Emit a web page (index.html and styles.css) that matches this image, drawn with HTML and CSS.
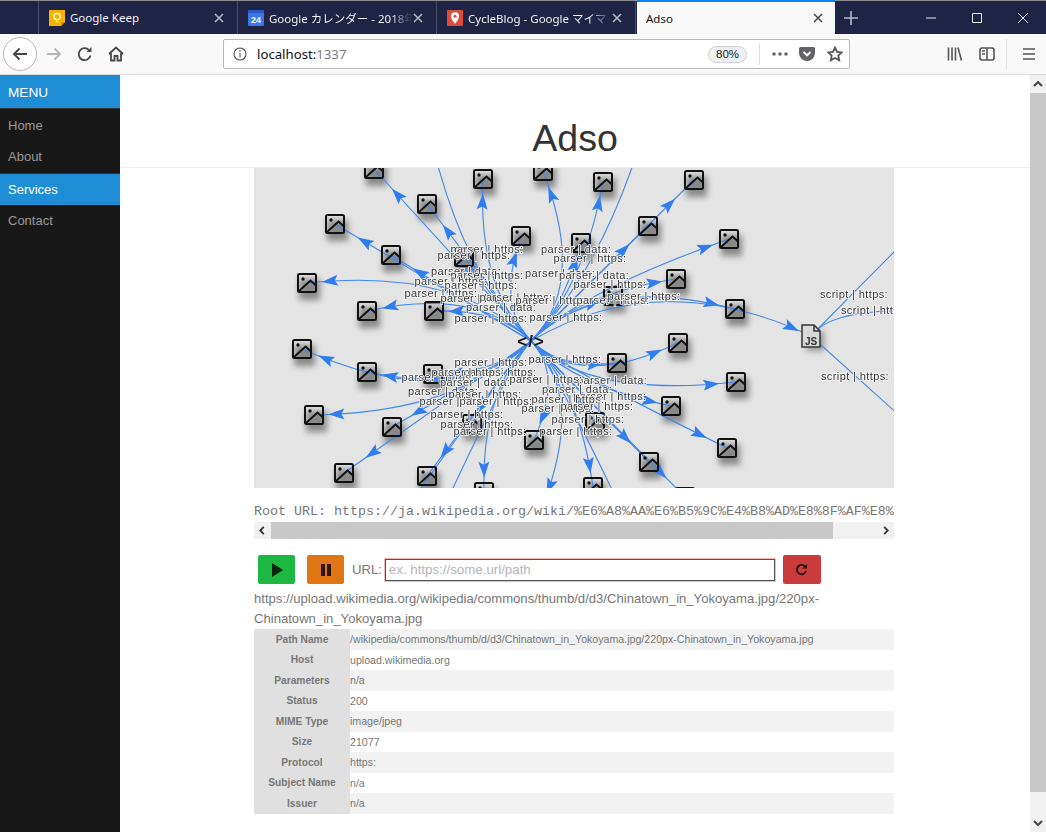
FILE: index.html
```html
<!doctype html>
<html lang="en">
<head>
    <meta charset="UTF-8">
    <title>Adso</title>
    <link rel="stylesheet" href="styles.css">
</head>
<body>

<div class="tabbar">
    <div class="tab-spacer"></div>
    <div class="tab">
        <svg class="favicon" viewBox="0 0 16 16"><path d="M0 0h16v12l-4 4H0z" fill="#f4b400"/><path d="M12 16v-4h4z" fill="#c98f00"/><circle cx="8" cy="6.500" r="3.200" fill="none" stroke="#fff" stroke-width="1.200"/><path d="M6.500 11.500h3" stroke="#fff" stroke-width="1.200"/></svg>
        <span class="tab-title">Google Keep</span>
        <svg class="tab-close" viewBox="0 0 12 12"><path d="M2 2l8 8M10 2l-8 8"/></svg>
    </div>
    <div class="tab">
        <svg class="favicon" viewBox="0 0 16 16"><rect width="16" height="16" rx="1" fill="#3b78e7"/><rect width="16" height="3" fill="#2a56c6"/><text x="8" y="13" class="cal-day">24</text></svg>
        <span class="tab-title fade">Google カレンダー - 2018年</span>
        <svg class="tab-close" viewBox="0 0 12 12"><path d="M2 2l8 8M10 2l-8 8"/></svg>
    </div>
    <div class="tab">
        <svg class="favicon" viewBox="0 0 16 16"><rect width="16" height="16" rx="1" fill="#dd4b39"/><path d="M8 2.200a4 4 0 0 0-4 4c0 3 4 7.600 4 7.600s4-4.600 4-7.600a4 4 0 0 0-4-4z" fill="#fff"/><circle cx="8" cy="6.200" r="1.500" fill="#dd4b39"/></svg>
        <span class="tab-title fade">CycleBlog - Google マイマップ</span>
        <svg class="tab-close" viewBox="0 0 12 12"><path d="M2 2l8 8M10 2l-8 8"/></svg>
    </div>
    <div class="tab tab-active">
        <span class="tab-title">Adso</span>
        <svg class="tab-close" viewBox="0 0 12 12"><path d="M2 2l8 8M10 2l-8 8"/></svg>
    </div>
    <svg class="tab-new" viewBox="0 0 14 14"><path d="M7 0v14M0 7h14"/></svg>
    <div class="win-controls">
        <svg viewBox="0 0 12 12"><path d="M1 6h10"/></svg>
        <svg viewBox="0 0 12 12"><path d="M1.500 1.500h9v9h-9z"/></svg>
        <svg viewBox="0 0 12 12"><path d="M1 1l10 10M11 1L1 11"/></svg>
    </div>
</div>

<div class="toolbar">
    <div class="nav-back">
        <svg viewBox="0 0 16 16"><path d="M15 8H2M7.500 2.500L2 8l5.500 5.500"/></svg>
    </div>
    <svg class="nav-icon nav-forward" viewBox="0 0 16 16"><path d="M1 8h13M8.500 2.500L14 8l-5.500 5.500"/></svg>
    <svg class="nav-icon" viewBox="0 0 16 16"><path d="M13.500 9.500A6 6 0 1 1 12 4"/><path d="M14.500 1v5h-5z" class="solid"/></svg>
    <svg class="nav-icon" viewBox="0 0 16 16"><path d="M1 8l7-6.500L15 8M3 7v7.500h3.500V10h3v4.500H13V7"/></svg>
    <div class="urlbar">
        <svg class="info-icon" viewBox="0 0 14 14"><circle cx="7" cy="7" r="6"/><path d="M7 6v4.500M7 3.200v1.500"/></svg>
        <span class="url-host">localhost:<span class="url-port">1337</span></span>
        <span class="zoom-pill">80%</span>
        <span class="url-sep"></span>
        <svg class="url-dots" viewBox="0 0 16 4"><circle cx="2" cy="2" r="1.800"/><circle cx="8" cy="2" r="1.800"/><circle cx="14" cy="2" r="1.800"/></svg>
        <svg class="url-pocket" viewBox="0 0 16 14"><path d="M1.500 0h13A1.500 1.500 0 0 1 16 1.500V6A8 8 0 0 1 0 6V1.500A1.500 1.500 0 0 1 1.500 0z"/><path d="M4.500 5L8 8.300 11.500 5" class="pocket-mark"/></svg>
        <svg class="url-star" viewBox="0 0 16 16"><path d="M8 1.500l2 4.300 4.700.6-3.400 3.200.9 4.700L8 12l-4.200 2.300.9-4.700L1.300 6.400 6 5.800z"/></svg>
    </div>
    <div class="tool-right">
        <svg viewBox="0 0 16 16"><path d="M1.500 1.500v13M5 1.500v13M8.500 1.500v13M11 1.500l3.500 13"/></svg>
        <svg viewBox="0 0 16 16"><rect x="1" y="2" width="14" height="12" rx="2"/><path d="M8 2v12M3 5h3M3 8h3"/></svg>
        <span class="tool-sep"></span>
        <svg viewBox="0 0 16 16"><path d="M2 3h12M2 8h12M2 13h12"/></svg>
    </div>
</div>

<div class="viewport">
    <nav class="side-menu">
        <a class="menu-heading" href="#">MENU</a>
        <ul class="menu-list">
            <li><a href="#">Home</a></li>
            <li><a href="#">About</a></li>
            <li class="menu-divided menu-selected"><a href="#">Services</a></li>
            <li><a href="#">Contact</a></li>
        </ul>
    </nav>

    <main class="main">
        <header class="header"><h1>Adso</h1></header>
        <div class="content">
            <svg id="graph" class="graph" viewBox="254 168 640 320"></svg>

            <pre class="root-url">Root URL: https://ja.wikipedia.org/wiki/%E6%A8%AA%E6%B5%9C%E4%B8%AD%E8%8F%AF%E8%A1%97</pre>
            <div class="hscroll">
                <svg viewBox="0 0 6 10"><path d="M5 1L1 5l4 4"/></svg>
                <div class="hscroll-track"><div class="hscroll-thumb"></div></div>
                <svg viewBox="0 0 6 10"><path d="M1 1l4 4-4 4"/></svg>
            </div>

            <form class="controls">
                <button type="button" class="btn btn-play"><svg viewBox="0 0 12 14"><path d="M1 0l11 7-11 7z"/></svg></button>
                <button type="button" class="btn btn-pause"><svg viewBox="0 0 12 14"><path d="M1 1h4v12H1zM7 1h4v12H7z"/></svg></button>
                <label class="url-label" for="url">URL:</label>
                <input id="url" class="url-input" type="text" placeholder="ex. https://some.url/path">
                <button type="button" class="btn btn-reload"><svg viewBox="0 0 14 14"><path d="M11.800 8.500A5 5 0 1 1 10.500 3.500" class="reload-arc"/><path d="M13 .8v5H8z"/></svg></button>
            </form>

            <p class="request-url">https://upload.wikimedia.org/wikipedia/commons/thumb/d/d3/Chinatown_in_Yokoyama.jpg/220px-Chinatown_in_Yokoyama.jpg</p>

            <table class="details">
                <tr><th>Path Name</th><td>/wikipedia/commons/thumb/d/d3/Chinatown_in_Yokoyama.jpg/220px-Chinatown_in_Yokoyama.jpg</td></tr>
                <tr><th>Host</th><td>upload.wikimedia.org</td></tr>
                <tr><th>Parameters</th><td>n/a</td></tr>
                <tr><th>Status</th><td>200</td></tr>
                <tr><th>MIME Type</th><td>image/jpeg</td></tr>
                <tr><th>Size</th><td>21077</td></tr>
                <tr><th>Protocol</th><td>https:</td></tr>
                <tr><th>Subject Name</th><td>n/a</td></tr>
                <tr><th>Issuer</th><td>n/a</td></tr>
            </table>
        </div>
    </main>

    <div class="vscroll">
        <svg viewBox="0 0 10 6"><path d="M1 5l4-4 4 4"/></svg>
        <div class="vscroll-track"><div class="vscroll-thumb"></div></div>
        <svg viewBox="0 0 10 6"><path d="M1 1l4 4 4-4"/></svg>
    </div>
</div>

<script src="graph.js"></script>
</body>
</html>
```

FILE: styles.css
```css
*{margin:0;padding:0;box-sizing:border-box;}
html,body{height:100%;overflow:hidden;}
body{
    display:flex;
    flex-direction:column;
    font-family:"Liberation Sans",Arial,sans-serif;
    background:#fff;
    color:#777;
}

/* tab strip */
.tabbar{
    display:flex;
    align-items:stretch;
    height:34px;
    flex:none;
    background:#1f2344;
    border-top:1px solid #8d8d92;
    color:#f2f2f6;
}
.tab-spacer{width:39px;border-right:1px solid #4b4e68;}
.tab{
    display:flex;
    align-items:center;
    width:199px;
    padding:0 12px 0 10px;
    border-right:1px solid #4b4e68;
}
.favicon{width:16px;height:16px;flex:none;margin-right:5px;}
.cal-day{font:bold 9px "Liberation Sans",sans-serif;fill:#fff;text-anchor:middle;}
.tab-title{
    flex:1;
    min-width:0;
    white-space:nowrap;
    overflow:hidden;
    font-family:"Noto Sans","Noto Sans CJK JP",sans-serif;
    font-size:11.500px;
}
.fade{
    -webkit-mask-image:linear-gradient(to right,#000 85%,transparent 100%);
    mask-image:linear-gradient(to right,#000 85%,transparent 100%);
}
.tab-close{width:12px;height:12px;flex:none;fill:none;stroke:#b9bac6;stroke-width:1.500;}
.tab-active{
    width:198px;
    margin-left:1px;
    margin-top:-1px;
    padding:0 11px 0 9px;
    background:#f9f9fa;
    color:#111;
    border-top:2px solid #0a84ff;
    border-right:0;
}
.tab-active .tab-close{stroke:#444;}
.tab-new{width:14px;height:14px;align-self:center;margin-left:9px;fill:none;stroke:#b9bac6;stroke-width:1.600;}
.win-controls{
    display:flex;
    align-items:center;
    gap:34px;
    margin-left:auto;
    padding-right:17px;
}
.win-controls svg{width:12px;height:12px;fill:none;stroke:#e8e8ee;stroke-width:1;}

/* toolbar */
.toolbar{
    display:flex;
    align-items:center;
    height:41px;
    flex:none;
    background:#f9f9fa;
    border-bottom:1px solid #d8d8da;
    padding-left:3px;
}
.nav-back{
    display:flex;
    align-items:center;
    justify-content:center;
    width:34px;
    height:34px;
    border-radius:50%;
    border:1px solid #b8b8ba;
    background:#fff;
    flex:none;
}
.nav-back svg{width:16px;height:16px;fill:none;stroke:#444;stroke-width:1.800;}
.nav-icon{width:16px;height:16px;flex:none;margin-left:15px;fill:none;stroke:#484848;stroke-width:1.800;}
.nav-forward{margin-left:9px;stroke:#b4b4b6;}
.nav-icon .solid{fill:#484848;stroke:none;}
.urlbar{
    display:flex;
    align-items:center;
    width:627px;
    height:30px;
    margin-left:99px;
    background:#fff;
    border:1px solid #b9b9bb;
    border-radius:2px;
    padding:0 6px 0 9px;
    font-size:14px;
    flex:none;
}
.info-icon{width:14px;height:14px;flex:none;fill:none;stroke:#555;stroke-width:1.100;}
.url-host{margin-left:10px;color:#111;font-family:"Noto Sans",sans-serif;font-size:13.200px;}
.url-port{color:#7b7b80;}
.zoom-pill{
    margin-left:auto;
    width:39px;
    height:17px;
    line-height:15px;
    text-align:center;
    font-size:11.500px;
    color:#222;
    background:#f0f0f2;
    border:1px solid #d0d0d2;
    border-radius:9px;
}
.url-sep{width:1px;height:22px;background:#dcdcde;margin:0 12px;}
.url-dots{width:16px;height:4px;fill:#666;}
.url-pocket{width:16px;height:14px;margin-left:11px;fill:#636367;}
.pocket-mark{fill:none;stroke:#fff;stroke-width:2;}
.url-star{width:16px;height:16px;margin-left:12px;fill:none;stroke:#555;stroke-width:1.800;}
.tool-right{
    display:flex;
    align-items:center;
    margin-left:auto;
    padding-right:9px;
}
.tool-right svg{width:16px;height:16px;fill:none;stroke:#555;stroke-width:1.600;margin-left:16px;}
.tool-sep{width:1px;height:30px;background:#e2e2e4;margin-left:11px;margin-right:-2px;}

/* page */
.viewport{display:flex;flex:1;min-height:0;}
.side-menu{width:120px;flex:none;background:#191818;font-size:13px;}
.side-menu a{display:block;text-decoration:none;color:#999;padding:0 8px;}
.menu-heading{
    height:34px;
    line-height:35px;
    font-size:13.600px;
    background:#1f8dd6;
    border-bottom:1px solid #333;
}
.side-menu a.menu-heading{color:#fff;}
.menu-list{list-style:none;padding-top:1px;}
.menu-list a{height:31px;line-height:31px;}
.menu-divided{margin-top:1px;border-top:1px solid #333;}
.menu-selected{background:#1f8dd6;}
.side-menu .menu-selected a{color:#fff;}

.main{flex:1;min-width:0;overflow:hidden;}
.header{
    height:93px;
    padding-top:42px;
    text-align:center;
    border-bottom:1px solid #eee;
}
.header h1{font-size:37.600px;line-height:42px;font-weight:300;color:#333;}
.content{width:640px;margin-left:134px;}
.graph{display:block;width:640px;height:320px;background:#e4e4e4;filter:blur(.35px);}
.g-edge{fill:none;stroke:#3f86ee;stroke-width:1.100;}
.g-arrow{fill:#2f7df0;}
.g-label{
    font:11px "Liberation Sans",sans-serif;
    fill:#333;
    stroke:#fff;
    stroke-width:1.500px;
    paint-order:stroke;
    letter-spacing:.4px;
    text-anchor:middle;
}
.g-root{font:bold 17px "Liberation Sans",sans-serif;fill:#111;text-anchor:middle;letter-spacing:1px;}
.g-js{font:bold 10px "Liberation Sans",sans-serif;fill:#333;text-anchor:middle;}
.root-url{
    margin-top:16px;
    height:15px;
    overflow:hidden;
    font:13.330px/15px "Liberation Mono",monospace;
    color:#777;
    white-space:pre;
}
.hscroll{
    display:flex;
    align-items:center;
    height:17px;
    margin-top:3px;
    background:#f1f1f1;
}
.hscroll svg{width:6px;height:9px;flex:none;margin:0 6px 0 5px;fill:none;stroke:#333;stroke-width:2;}
.hscroll svg:last-child{margin:0 5px 0 6px;}
.hscroll-track{flex:1;height:100%;}
.hscroll-thumb{width:562px;height:100%;background:#c8c8c8;}
.controls{
    display:flex;
    align-items:center;
    height:29px;
    margin-top:16px;
    padding-left:4px;
    font-size:13.100px;
}
.btn{
    display:flex;
    align-items:center;
    justify-content:center;
    width:37px;
    height:29px;
    border:0;
    border-radius:2px;
    fill:rgba(0,0,0,.8);
}
.btn svg{width:12px;height:14px;}
.btn-play{background:#1cb841;}
.btn-pause{background:#df7514;margin-left:12px;}
.btn-reload{background:#ca3c3c;width:38px;margin-left:8px;}
.btn-reload svg{width:13px;height:13px;}
.reload-arc{fill:none;stroke:rgba(0,0,0,.8);stroke-width:2;}
.url-label{margin-left:8px;}
.url-input{
    width:390px;
    height:22px;
    margin-left:3px;
    padding:0 3px;
    border:1px solid #555;
    outline:1px solid #f2b8b8;
    font:13.300px "Liberation Sans",sans-serif;
    color:#777;
}
.url-input::placeholder{color:#b5b5b5;opacity:1;}
.request-url{
    margin-top:5px;
    font-size:13.100px;
    line-height:20px;
    color:#777;
}
.details{
    width:640px;
    border-collapse:collapse;
    font-size:10.640px;
    table-layout:fixed;
}
.details tr{height:20.500px;}
.details th{width:96px;background:#e0e0e0;color:#777;font-size:10.200px;font-weight:bold;text-align:center;padding:0;}
.details td{padding:0;color:#777;}
.details tr:nth-child(odd) td{background:#f2f2f2;}

.vscroll{
    display:flex;
    flex-direction:column;
    width:16px;
    flex:none;
    background:#f1f1f1;
}
.vscroll svg{width:10px;height:6px;margin:6px 3px;fill:none;stroke:#444;stroke-width:2;flex:none;}
.vscroll-track{flex:1;}
.vscroll-thumb{height:699px;background:#c8c8c8;}
```

FILE: graph.js
```js
// request graph, screen-like coordinates (see the viewBox on #graph)
var NS = "http://www.w3.org/2000/svg";
var oGraph = document.getElementById("graph");
var root = [531, 341];
var js = [811, 336];
var BUNDLE = 0.33;

// x, y, how far the edge leaves along the diagonal (default BUNDLE, 0 = straight)
var aImg = [
    [374,169,0],[483,179],[543,171],[603,182],[694,180,0],[427,204,0],[335,224,0],
    [648,226,0],[521,236],[729,239,.25],[391,255,0],[464,257],[581,243],[676,279],
    [307,283],[367,311],[434,311],[613,296],[735,309],[302,349],[367,372],
    [433,374],[617,363],[678,343],[736,382,.28],[314,415],[392,427,.1],[671,406],
    [472,424],[534,440],[595,422],[727,448,.1],[344,473,0],[427,476,.1],[649,462,0],
    [484,492],[593,487],
    // these fall outside the visible part of the canvas
    [425,110],[650,110],[370,560,.1],[420,560,.1],[650,570,.1],[541,510],[685,497,0]
];

var aLabel = [
    ["parser | https:",487,250],["parser | https:",474,256],["parser | data:",576,250],["parser | https:",590,259],
    ["parser | data:",466,272],["parser | https:",487,276],["parser | data:",560,274],["parser | data:",594,276],
    ["parser | https:",451,282],["parser | https:",481,286],["parser | https:",610,285],["parser | https:",441,294],
    ["parser | https:",477,299],["parser | https:",516,298],["parser | https:",552,301],["parser | https:",613,301],
    ["parser | https:",644,297],["parser | data:",501,308],["parser | https:",491,319],["parser | https:",566,318],
    ["parser | https:",491,363],["parser | https:",565,360],["parser | data:",612,381],["parser | https:",500,373],
    ["parser | https:",438,378],["parser | https:",468,373],["parser | data:",475,383],["parser | https:",546,380],
    ["parser | data:",577,390],["parser | data:",443,392],["parser | https:",485,395],["parser | https:",610,397],
    ["parser | https:",456,402],["parser | https:",496,402],["parser | https:",568,400],["parser | https:",558,409],
    ["parser | https:",597,407],["parser | https:",467,415],["parser | https:",477,425],["parser | https:",490,432],
    ["parser | https:",588,420],["parser | https:",576,432],
    ["script | https:",854,295],["script | https:",875,311],["script | https:",855,377]
];

function el(name, attrs, parent) {
    var o = document.createElementNS(NS, name);
    for (var k in attrs) {
        o.setAttribute(k, attrs[k]);
    }
    (parent || oGraph).appendChild(o);
    return o;
}

function edge(a, b, c, arrowBack) {
    el("path", {"class": "g-edge", d: "M" + a[0] + " " + a[1] + "Q" + c[0] + " " + c[1] + " " + b[0] + " " + b[1]});
    if (!arrowBack) {
        return;
    }

    // arrow head just off the target node, pointing along the curve
    var len = Math.sqrt(Math.pow(b[0] - a[0], 2) + Math.pow(b[1] - a[1], 2));
    var t = 1 - arrowBack / len;
    var px = (1 - t) * (1 - t) * a[0] + 2 * t * (1 - t) * c[0] + t * t * b[0];
    var py = (1 - t) * (1 - t) * a[1] + 2 * t * (1 - t) * c[1] + t * t * b[1];
    var deg = Math.atan2(b[1] - c[1], b[0] - c[0]) * 180 / Math.PI;
    el("path", {"class": "g-arrow", d: "M8 0L-8 -5.500L-5 0L-8 5.500z", transform: "translate(" + px + " " + py + ") rotate(" + deg + ")"});
}

// edges leave the root in four diagonal bundles, then bend to their node
function bundled(n) {
    var dx = n[0] - root[0], dy = n[1] - root[1];
    var k = (n[2] === undefined ? BUNDLE : n[2]) * Math.max(Math.abs(dx), Math.abs(dy));
    return [root[0] + (dx < 0 ? -k : k), root[1] + (dy < 0 ? -k : k)];
}

var defs = el("defs", {});
var blur = el("filter", {id: "soft", x: "-50%", y: "-50%", width: "200%", height: "200%"}, defs);
el("feGaussianBlur", {stdDeviation: "3"}, blur);

var imgIcon = el("symbol", {id: "img-node", viewBox: "0 0 20 20", overflow: "visible"}, defs);
el("rect", {x: 1, y: 1, width: 18, height: 18, rx: 1.500, fill: "none", stroke: "#111", "stroke-width": 2}, imgIcon);
el("circle", {cx: 6, cy: 6, r: 1.700, fill: "#111"}, imgIcon);
el("path", {d: "M1.500 18.500L13.500 7.500L19 12.500", fill: "none", stroke: "#111", "stroke-width": 2}, imgIcon);

// shadows go under the edges, the icons themselves are see-through
aImg.forEach(function (n) {
    el("rect", {x: n[0] - 8, y: n[1] - 4, width: 21, height: 21, fill: "#000", opacity: .4, filter: "url(#soft)"});
});
el("rect", {x: 806, y: 331, width: 18, height: 20, fill: "#000", opacity: .35, filter: "url(#soft)"});

aImg.forEach(function (n) {
    edge(root, n, bundled(n), 18);
});
edge(root, js, [660, 265], 18);
edge(js, [910, 236], [860, 286]);
edge(js, [910, 425], [860, 380]);
edge(js, [905, 311], [830, 310]);

aImg.forEach(function (n) {
    el("use", {href: "#img-node", x: n[0] - 10, y: n[1] - 10, width: 20, height: 20});
});

// js file node
el("path", {d: "M802 325h12l6 6v16h-18z", fill: "#d8d8d8", stroke: "#333", "stroke-width": 1.500});
el("path", {d: "M814 325v6h6", fill: "none", stroke: "#333", "stroke-width": 1.500});
el("text", {"class": "g-js", x: 811, y: 345}).textContent = "JS";

aLabel.forEach(function (l) {
    el("text", {"class": "g-label", x: l[1], y: l[2] + 3}).textContent = l[0];
});

// root html node
el("text", {"class": "g-root", x: 531, y: 347}).textContent = "</>";
```
